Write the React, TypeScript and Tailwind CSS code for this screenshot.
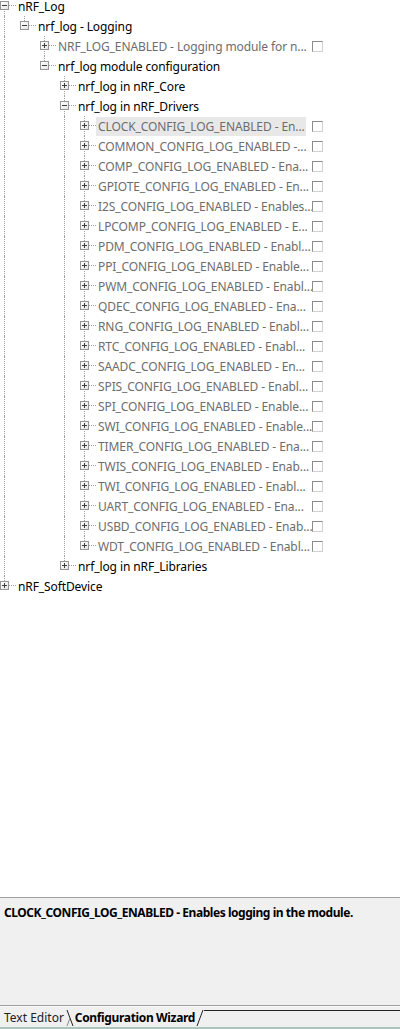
type Node = {
  label: string;
  open?: boolean;
  children?: Node[];
  gray?: boolean;
  check?: boolean;
  hl?: boolean;
};

const drivers = [
  "CLOCK_CONFIG_LOG_ENABLED - En...",
  "COMMON_CONFIG_LOG_ENABLED -...",
  "COMP_CONFIG_LOG_ENABLED - Ena...",
  "GPIOTE_CONFIG_LOG_ENABLED - En...",
  "I2S_CONFIG_LOG_ENABLED - Enables...",
  "LPCOMP_CONFIG_LOG_ENABLED - E...",
  "PDM_CONFIG_LOG_ENABLED - Enabl...",
  "PPI_CONFIG_LOG_ENABLED - Enable...",
  "PWM_CONFIG_LOG_ENABLED - Enabl...",
  "QDEC_CONFIG_LOG_ENABLED - Ena...",
  "RNG_CONFIG_LOG_ENABLED - Enabl...",
  "RTC_CONFIG_LOG_ENABLED - Enabl...",
  "SAADC_CONFIG_LOG_ENABLED - En...",
  "SPIS_CONFIG_LOG_ENABLED - Enabl...",
  "SPI_CONFIG_LOG_ENABLED - Enable...",
  "SWI_CONFIG_LOG_ENABLED - Enable...",
  "TIMER_CONFIG_LOG_ENABLED - Ena...",
  "TWIS_CONFIG_LOG_ENABLED - Enab...",
  "TWI_CONFIG_LOG_ENABLED - Enabl...",
  "UART_CONFIG_LOG_ENABLED - Ena...",
  "USBD_CONFIG_LOG_ENABLED - Enab...",
  "WDT_CONFIG_LOG_ENABLED - Enabl...",
];

const tree: Node[] = [
  {
    label: "nRF_Log",
    open: true,
    children: [
      {
        label: "nrf_log - Logging",
        open: true,
        children: [
          { label: "NRF_LOG_ENABLED - Logging module for n...", gray: true, check: true },
          {
            label: "nrf_log module configuration",
            open: true,
            children: [
              { label: "nrf_log in nRF_Core" },
              {
                label: "nrf_log in nRF_Drivers",
                open: true,
                children: drivers.map((d, i) => ({ label: d, gray: true, check: true, hl: i === 0 })),
              },
              { label: "nrf_log in nRF_Libraries" },
            ],
          },
        ],
      },
    ],
  },
  { label: "nRF_SoftDevice" },
];

type Row = { node: Node; guides: boolean[]; hasNext: boolean; first: boolean };

function flatten(nodes: Node[], guides: boolean[], out: Row[]) {
  nodes.forEach((n, i) => {
    const hasNext = i < nodes.length - 1;
    out.push({ node: n, guides, hasNext, first: out.length === 0 });
    if (n.open && n.children) flatten(n.children, [...guides, hasNext], out);
  });
  return out;
}

const rows = flatten(tree, [], []);

function ExpandBox({ open }: { open?: boolean }) {
  return (
    <div className="absolute left-0 top-[5px] h-[9px] w-[9px] border border-[#969696] bg-gradient-to-br from-white to-[#e6e6e6]">
      <div className="absolute left-[1px] top-[3px] h-px w-[5px] bg-[#3c3c3c]" />
      {!open && <div className="absolute left-[3px] top-[1px] h-[5px] w-px bg-[#3c3c3c]" />}
    </div>
  );
}

function Checkbox() {
  return (
    <div className="h-[11px] w-[11px] border border-b-[#d0d0d0] border-l-[#8c8c8c] border-r-[#d0d0d0] border-t-[#8c8c8c] bg-white" />
  );
}

function TreeRow({ row }: { row: Row }) {
  const { node, guides, hasNext, first } = row;
  return (
    <div className="flex h-5 items-center">
      {guides.map((g, i) => (
        <div key={i} className="relative h-5 w-5 shrink-0">
          {g && <div className="absolute left-[4px] top-0 h-5 border-l border-dotted border-[#a0a0a0]" />}
        </div>
      ))}
      <div className="relative h-5 w-4 shrink-0">
        {!first && <div className="absolute left-[4px] top-0 h-[9px] border-l border-dotted border-[#a0a0a0]" />}
        {hasNext && <div className="absolute left-[4px] top-[9px] h-[11px] border-l border-dotted border-[#a0a0a0]" />}
        <div className="absolute left-[9px] top-[9px] w-[7px] border-t border-dotted border-[#a0a0a0]" />
        <ExpandBox open={node.open} />
      </div>
      {node.check ? (
        <>
          <div
            className={`mr-[6px] flex h-[19px] min-w-0 flex-1 items-center pl-[2px] pt-px ${node.hl ? "bg-[#e8e8e8]" : ""}`}
          >
            <span className="whitespace-nowrap text-[#6d6d6d]">{node.label}</span>
          </div>
          <div className="w-[88px] shrink-0">
            <Checkbox />
          </div>
        </>
      ) : (
        <span className={`whitespace-nowrap pl-[2px] pt-px ${node.gray ? "text-[#6d6d6d]" : "text-black"}`}>
          {node.label}
        </span>
      )}
    </div>
  );
}

export default function App() {
  return (
    <div className="flex h-[1029px] w-[400px] flex-col overflow-hidden bg-white font-['Noto_Sans',sans-serif] text-[12px] leading-none">
      <div className="flex-1 overflow-hidden tracking-[-0.1px]">
        <div className="-mt-1">
          {rows.map((r, i) => (
            <TreeRow key={i} row={r} />
          ))}
        </div>
      </div>

      <div className="h-[108px] shrink-0 border-t border-[#a0a0a0] bg-[#f0f0f0] px-[4px] pt-[9px]">
        <p className="whitespace-nowrap font-bold tracking-[-0.45px] text-black">
          CLOCK_CONFIG_LOG_ENABLED - Enables logging in the module.
        </p>
      </div>

      <div className="shrink-0 border-t border-[#a0a0a0] bg-[#f0f0f0]">
        <div className="flex h-[23px] items-stretch border-t border-[#fafafa] border-b-2 border-b-[#a9c4bf]">
          <div className="flex items-center pl-[4px] pr-[2px] pt-px text-[#222]">Text Editor</div>
          <svg width="8" height="21" viewBox="0 0 8 21" className="shrink-0">
            <path d="M1 3 L7 19" stroke="#222" strokeWidth="1" fill="none" />
            <path d="M1 19 L4 11" stroke="#888" strokeWidth="1" fill="none" />
          </svg>
          <div className="flex items-center px-[1px] pt-px font-bold tracking-[-0.35px] text-black">
            Configuration Wizard
          </div>
          <svg width="8" height="21" viewBox="0 0 8 21" className="shrink-0">
            <path d="M1 19 L7 3" stroke="#222" strokeWidth="1" fill="none" />
          </svg>
          <div className="mt-[3px] flex-1 border-t border-[#222]" />
        </div>
      </div>
    </div>
  );
}
